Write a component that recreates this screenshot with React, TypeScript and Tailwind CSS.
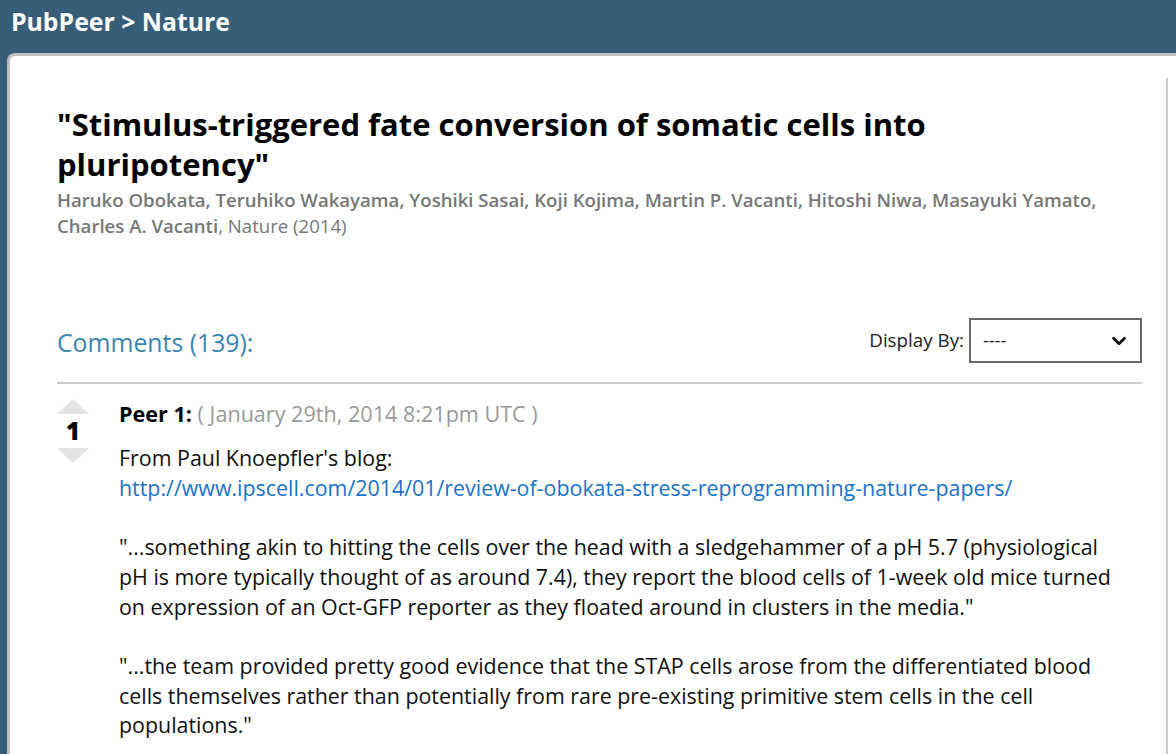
import { ChevronDown } from "lucide-react";

const AUTHORS = [
  "Haruko Obokata",
  "Teruhiko Wakayama",
  "Yoshiki Sasai",
  "Koji Kojima",
  "Martin P. Vacanti",
  "Hitoshi Niwa",
  "Masayuki Yamato",
  "Charles A. Vacanti",
];

function VoteBox({ score }: { score: number }) {
  return (
    <div className="flex w-[32px] shrink-0 flex-col items-center">
      <div className="h-0 w-0 border-x-[16px] border-b-[15px] border-x-transparent border-b-[#e4e4e4]" />
      <div className="py-[3px] text-[24px] font-black leading-[28px] text-black">{score}</div>
      <div className="h-0 w-0 border-x-[16px] border-t-[15px] border-x-transparent border-t-[#e4e4e4]" />
    </div>
  );
}

export default function App() {
  return (
    <div className="h-[754px] overflow-hidden bg-[#365e78] font-['Open_Sans',sans-serif]">
      <header className="flex h-[53px] items-center px-[11px] pb-[10px]">
        <h1 className="text-[24.8px] font-bold text-white">PubPeer &gt; Nature</h1>
      </header>

      <div className="ml-[7px] h-[701px] rounded-tl-[8px] border-l-[3px] border-t-[3px] border-[#c0c0c0] bg-white">
        <div className="mt-[22px] mr-[8px] h-full border-r-[2px] border-[#c8c8c8] pl-[47px] pr-[24px]">
          <div className="pt-[26px]">
            <h2 className="text-[31px] font-bold leading-[40px] text-black">
              "Stimulus-triggered fate conversion of somatic cells into pluripotency"
            </h2>
            <p className="mt-[3px] text-[18.6px] leading-[26px] text-[#777]">
              <span className="font-semibold">{AUTHORS.join(", ")}</span>, Nature (2014)
            </p>
          </div>

          <div className="mt-[79px] flex items-end justify-between border-b-[2px] border-[#cccccc] pb-[19px]">
            <div className="pb-[5px] text-[24.8px] leading-[32px] text-[#3a86b1]">Comments (139):</div>
            <div className="flex items-center gap-[5px]">
              <span className="text-[18.8px] text-[#222]">Display By:</span>
              <div className="flex h-[45px] w-[173px] items-center justify-between border-[2px] border-[#6a6a6a] pl-[12px] pr-[10px]">
                <span className="text-[18px] text-[#222]">----</span>
                <ChevronDown size={22} strokeWidth={3} className="text-[#111]" />
              </div>
            </div>
          </div>

          <div className="mt-[15px] flex gap-[30px]">
            <VoteBox score={1} />
            <div className="min-w-0 flex-1 pr-[12px] text-[21.4px] leading-[29.75px] text-[#111]">
              <div className="text-[21.6px] leading-[30px]">
                <span className="font-bold text-black">Peer 1:</span>{" "}
                <span className="text-[#9a9a9a]">( January 29th, 2014 8:21pm UTC )</span>
              </div>
              <div className="mt-[14px]">
                <p>
                  From Paul Knoepfler's blog:
                  <br />
                  <a className="text-[#1a73c8]" href="#">
                    http://www.ipscell.com/2014/01/review-of-obokata-stress-reprogramming-nature-papers/
                  </a>
                </p>
                <p className="mt-[29.5px]">
                  "...something akin to hitting the cells over the head with a sledgehammer of a pH 5.7 (physiological pH is more typically thought of as around 7.4), they report the blood cells of 1-week old mice turned on expression of an Oct-GFP reporter as they floated around in clusters in the media."
                </p>
                <p className="mt-[29.5px]">
                  "...the team provided pretty good evidence that the STAP cells arose from the differentiated blood cells themselves rather than potentially from rare pre-existing primitive stem cells in the cell populations."
                </p>
              </div>
            </div>
          </div>
        </div>
      </div>
    </div>
  );
}
